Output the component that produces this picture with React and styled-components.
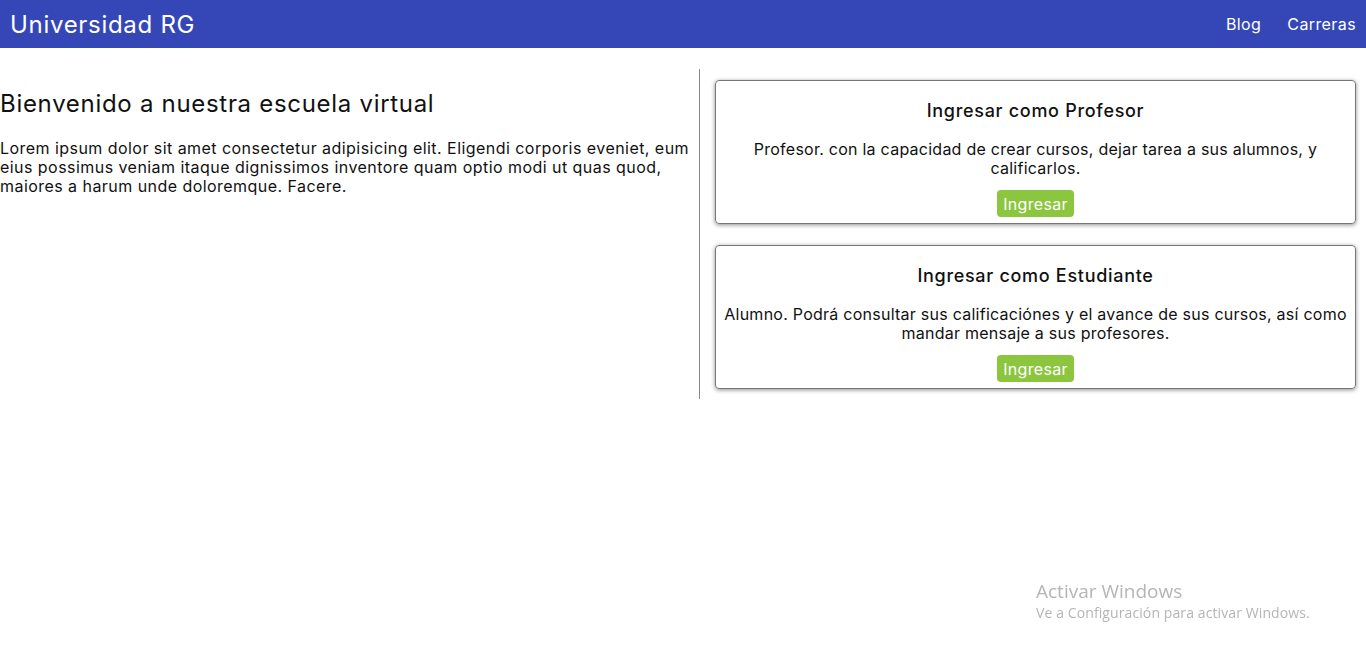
import React from "react";
import styled, { createGlobalStyle } from "styled-components";

const Global = createGlobalStyle`
  * { box-sizing: border-box; }
  body { margin: 0; font-family: "Inter", "Noto Sans", sans-serif; color: #111; background: #fff; }
`;

const Header = styled.header`
  height: 48px;
  background: #3547b7;
  display: flex;
  align-items: center;
  justify-content: space-between;
  padding: 0 10px;
  color: #fff;
`;

const Brand = styled.div`
  font-size: 24px;
  letter-spacing: 0.7px;
  font-weight: 400;
`;

const Nav = styled.nav`
  display: flex;
  gap: 26px;
`;

const NavLink = styled.a`
  color: #fff;
  font-size: 16px;
  letter-spacing: 0.4px;
  text-decoration: none;
`;

const Main = styled.main`
  display: flex;
  margin-top: 21px;
`;

const Intro = styled.section`
  width: 700px;
  border-right: 1px solid #888;
  padding-top: 20px;
`;

const Title = styled.h2`
  margin: 0 0 21px;
  font-size: 24px;
  letter-spacing: 0.7px;
  line-height: 29px;
  font-weight: 400;
`;

const Text = styled.p`
  margin: 0;
  font-size: 16px;
  letter-spacing: 0.45px;
  line-height: 19px;
`;

const Cards = styled.section`
  flex: 1;
  display: flex;
  flex-direction: column;
  padding: 0 0 0 5px;
`;

const Card = styled.div`
  margin: 11px 10px 10px 10px;
  border: 1px solid #777;
  border-radius: 4px;
  box-shadow: 0 1px 4px rgba(0, 0, 0, 0.45);
  padding: 19px 6px 6px;
  display: flex;
  flex-direction: column;
  align-items: center;
  text-align: center;
`;

const CardTitle = styled.h3`
  margin: 0 0 18px;
  font-size: 18px;
  line-height: 22px;
  letter-spacing: 0.7px;
  font-weight: 500;
`;

const CardText = styled.p`
  margin: 0 0 12px;
  font-size: 16px;
  letter-spacing: 0.25px;
  line-height: 19px;
`;

const Button = styled.button`
  background: #8cc63f;
  color: #fff;
  border: none;
  border-radius: 4px;
  font-family: inherit;
  font-size: 16px;
  letter-spacing: 0.3px;
  padding: 3px 6px;
  height: 27px;
`;

const Watermark = styled.div`
  position: fixed;
  left: 1036px;
  top: 580px;
  color: #b5b5b5;
  font-family: "Open Sans", "Noto Sans", sans-serif;
  pointer-events: none;
`;

const WmTitle = styled.div`
  font-size: 19px;
  line-height: 22px;
`;

const WmSub = styled.div`
  font-size: 14px;
  letter-spacing: 0.1px;
  margin-top: 1px;
`;

const cards = [
  {
    title: "Ingresar como Profesor",
    text: "Profesor. con la capacidad de crear cursos, dejar tarea a sus alumnos, y calificarlos.",
  },
  {
    title: "Ingresar como Estudiante",
    text: "Alumno. Podrá consultar sus calificaciónes y el avance de sus cursos, así como mandar mensaje a sus profesores.",
  },
];

export default function App() {
  return (
    <>
      <Global />
      <Header>
        <Brand>Universidad RG</Brand>
        <Nav>
          <NavLink href="#">Blog</NavLink>
          <NavLink href="#">Carreras</NavLink>
        </Nav>
      </Header>
      <Main>
        <Intro>
          <Title>Bienvenido a nuestra escuela virtual</Title>
          <Text>
            Lorem ipsum dolor sit amet consectetur adipisicing elit. Eligendi corporis eveniet, eum eius possimus
            veniam itaque dignissimos inventore quam optio modi ut quas quod, maiores a harum unde doloremque. Facere.
          </Text>
        </Intro>
        <Cards>
          {cards.map((c) => (
            <Card key={c.title}>
              <CardTitle>{c.title}</CardTitle>
              <CardText>{c.text}</CardText>
              <Button>Ingresar</Button>
            </Card>
          ))}
        </Cards>
      </Main>
      <Watermark>
        <WmTitle>Activar Windows</WmTitle>
        <WmSub>Ve a Configuración para activar Windows.</WmSub>
      </Watermark>
    </>
  );
}
